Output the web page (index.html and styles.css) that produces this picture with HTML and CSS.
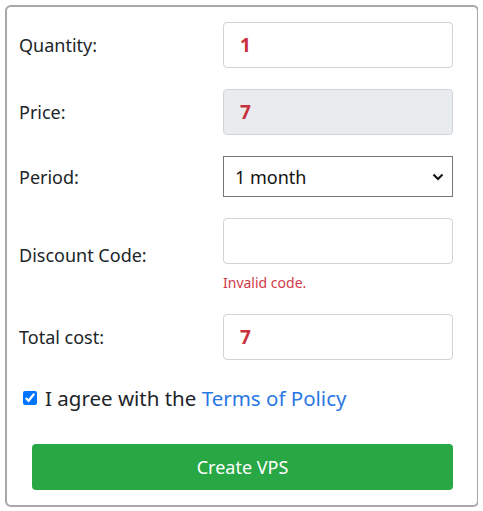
FILE: index.html
```html
<!DOCTYPE html>
<html lang="en">
<head>
  <meta charset="UTF-8">
  <meta name="viewport" content="width=device-width, initial-scale=1.0">
  <title>Create VPS</title>
  <link rel="stylesheet" href="styles.css">
</head>
<body>

  <!-- Order form card -->
  <form class="order-card">

    <div class="form-row">
      <label class="form-label" for="quantity">Quantity:</label>
      <div class="form-field">
        <input class="form-input value" id="quantity" type="text" value="1">
      </div>
    </div>

    <div class="form-row">
      <label class="form-label" for="price">Price:</label>
      <div class="form-field">
        <input class="form-input value" id="price" type="text" value="7" readonly>
      </div>
    </div>

    <div class="form-row">
      <label class="form-label" for="period">Period:</label>
      <div class="form-field select-wrap">
        <select class="form-select" id="period">
          <option>1 month</option>
          <option>3 months</option>
          <option>6 months</option>
          <option>12 months</option>
        </select>
        <svg class="select-arrow" width="12" height="8" viewBox="0 0 12 8">
          <path d="M1.5 1.5 L6 6 L10.5 1.5" fill="none" stroke="#111" stroke-width="2"/>
        </svg>
      </div>
    </div>

    <div class="form-row">
      <label class="form-label" for="discount">Discount Code:</label>
      <div class="form-field">
        <input class="form-input" id="discount" type="text" value="">
        <div class="invalid-text">Invalid code.</div>
      </div>
    </div>

    <div class="form-row">
      <label class="form-label" for="total">Total cost:</label>
      <div class="form-field">
        <input class="form-input value" id="total" type="text" value="7">
      </div>
    </div>

    <!-- Terms -->
    <label class="agree">
      <input type="checkbox" checked>
      <span>I agree with the <a href="#">Terms of Policy</a></span>
    </label>

    <button type="button" class="btn-create">Create VPS</button>
  </form>

</body>
</html>
```

FILE: styles.css
```css
body {
  margin: 5px;
  font-family: "Noto Sans", "Open Sans", sans-serif;
  color: #212529;
  background: #fff;
}

.order-card {
  width: 474px;
  height: 502px;
  box-sizing: border-box;
  border: 2px solid #a8a8a8;
  border-radius: 6px;
  box-shadow: 0 0 2px rgba(0,0,0,0.15);
  padding: 15px 25px 0 12px;
}

.form-row {
  display: grid;
  grid-template-columns: 204px 230px;
  align-items: center;
  margin-bottom: 21px;
}

.form-label {
  font-size: 18px;
}

.form-field {
  display: flex;
  flex-direction: column;
}

.form-input {
  height: 46px;
  box-sizing: border-box;
  border: 1px solid #ced4da;
  border-radius: 4px;
  padding: 0 16px;
  font-family: inherit;
  font-size: 19px;
  color: #212529;
  background: #fff;
}

.form-input[readonly] {
  background: #e9ecef;
}

.value {
  font-weight: 700;
  color: #c9303e;
}

/* Native-looking select with its own chevron */
.select-wrap {
  position: relative;
}

.form-select {
  appearance: none;
  height: 41px;
  box-sizing: border-box;
  border: 1px solid #767676;
  border-radius: 0;
  padding: 0 11px;
  font-family: inherit;
  font-size: 18px;
  color: #111;
  background: #fff;
}

.select-arrow {
  position: absolute;
  right: 9px;
  top: 17px;
}

.invalid-text {
  margin-top: 9px;
  font-size: 14px;
  color: #d1394b;
}

.form-row:nth-child(4) {
  margin-bottom: 22px;
}

.agree {
  display: flex;
  align-items: center;
  gap: 8px;
  margin: 24px 0 0 4px;
  font-size: 20.5px;
}

.agree input {
  width: 14px;
  height: 14px;
  margin: 0;
  accent-color: #0075ff;
}

.agree a {
  color: #2a78e4;
  text-decoration: none;
}

.btn-create {
  display: block;
  width: 421px;
  height: 46px;
  margin: 32px 0 0 13px;
  border: none;
  border-radius: 4px;
  background: #28a745;
  color: #fff;
  font-family: inherit;
  font-size: 18px;
  cursor: pointer;
}
```
